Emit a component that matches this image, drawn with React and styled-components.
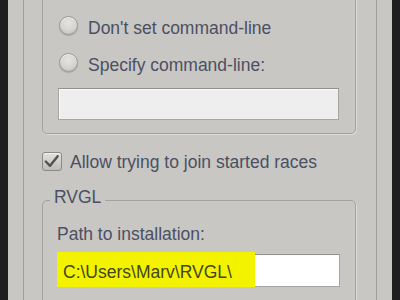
import React from "react";
import styled, { createGlobalStyle } from "styled-components";

const GlobalStyle = createGlobalStyle`
  html, body {
    margin: 0;
    padding: 0;
    background: #1f1f1f;
    overflow: hidden;
  }
  body {
    font-family: "Liberation Sans", Arial, sans-serif;
  }
`;

const Window = styled.div`
  margin: 0 8px;
  height: 300px;
  box-sizing: border-box;
  padding: 0 15px;
  background: #c8c7c3;
  overflow: hidden;
`;

const Frame = styled.div`
  display: flow-root;
  height: 100%;
  overflow: hidden;
  border-left: 1px solid #a09f9b;
  border-right: 1px solid #a09f9b;
  padding: 0 20px 0 18px;
`;

const Group = styled.fieldset`
  margin: ${(p) => p.$top || 0}px 0 0;
  padding: ${(p) => p.$padding};
  border: 1px solid #a3a29e;
  border-radius: 5px;
  box-shadow: 1px 1px 0 #dcdbd7;
  min-width: 0;
`;

const Legend = styled.legend`
  margin-left: -7px;
  padding: 0 4px 7px;
  font-size: 17.5px;
  line-height: 20px;
  color: #4b5063;
`;

const OptionRow = styled.label`
  display: flex;
  align-items: center;
  gap: ${(p) => p.$gap || 10}px;
  height: ${(p) => p.$height || 37}px;
  padding-left: ${(p) => p.$indent || 0}px;
`;

const Radio = styled.span`
  flex: none;
  width: 19px;
  height: 19px;
  box-sizing: border-box;
  border-radius: 50%;
  border: 1px solid #9b9a96;
  background: radial-gradient(circle at 50% 35%, #e4e4e2 0%, #d5d4d1 55%, #b8b7b4 100%);
  box-shadow: 0 1px 1px rgba(0, 0, 0, 0.18), inset 0 1px 0 #f0f0ee;
`;

const Box = styled.span`
  flex: none;
  width: 20px;
  height: 19px;
  box-sizing: border-box;
  border-radius: 3px;
  border: 1px solid #8a8985;
  background: linear-gradient(#e2e2e0, #bdbcb9);
  box-shadow: inset 0 1px 0 #f2f2f0;
  display: flex;
  align-items: center;
  justify-content: center;
  overflow: visible;
`;

const Text = styled.span`
  font-size: 17.5px;
  line-height: 20px;
  color: #4b5063;
  padding-top: ${(p) => p.$shift || 0}px;
  white-space: nowrap;
`;

const Field = styled.div`
  display: flex;
  align-items: stretch;
  height: ${(p) => p.$height}px;
  margin-top: ${(p) => p.$gap}px;
  box-sizing: border-box;
  border: 1px solid #a6a5a1;
  border-top-color: #93928e;
  background: ${(p) => p.$bg};
  box-shadow: inset 1px 1px 0 #fafafa;
`;

const Marker = styled.span`
  display: flex;
  align-items: center;
  margin: -3px 0 -1px -1px;
  padding: 6px 23px 0 6px;
  background: #f3f300;
  font-size: 17.5px;
  color: #45451b;
  white-space: nowrap;
`;

const Check = () => (
  <svg width="20" height="19" viewBox="0 0 20 19" style={{ marginLeft: -1 }}>
    <path
      d="M4 9.5 L8.5 14 L16.5 4"
      fill="none"
      stroke="#55544f"
      strokeWidth="2.6"
      strokeLinecap="round"
      strokeLinejoin="round"
    />
  </svg>
);

export default function App() {
  return (
    <>
      <GlobalStyle />
      <Window>
        <Frame>
          <Group $top={-10} $padding="16px 16px 13px 15px">
            <OptionRow $indent={1}>
              <Radio />
              <Text $shift={4}>Don't set command-line</Text>
            </OptionRow>
            <OptionRow $indent={1}>
              <Radio />
              <Text $shift={4}>Specify command-line:</Text>
            </OptionRow>
            <Field $height={32} $gap={7} $bg="#eeeeee" />
          </Group>

          <OptionRow $height={20} $gap={8} style={{ marginTop: 17 }}>
            <Box>
              <Check />
            </Box>
            <Text $shift={2}>Allow trying to join started races</Text>
          </OptionRow>

          <Group $top={16} $padding="10px 15px 20px 14px">
            <Legend>RVGL</Legend>
            <Text>Path to installation:</Text>
            <Field $height={33} $gap={10} $bg="#ffffff">
              <Marker>C:\Users\Marv\RVGL\</Marker>
            </Field>
          </Group>
        </Frame>
      </Window>
    </>
  );
}
